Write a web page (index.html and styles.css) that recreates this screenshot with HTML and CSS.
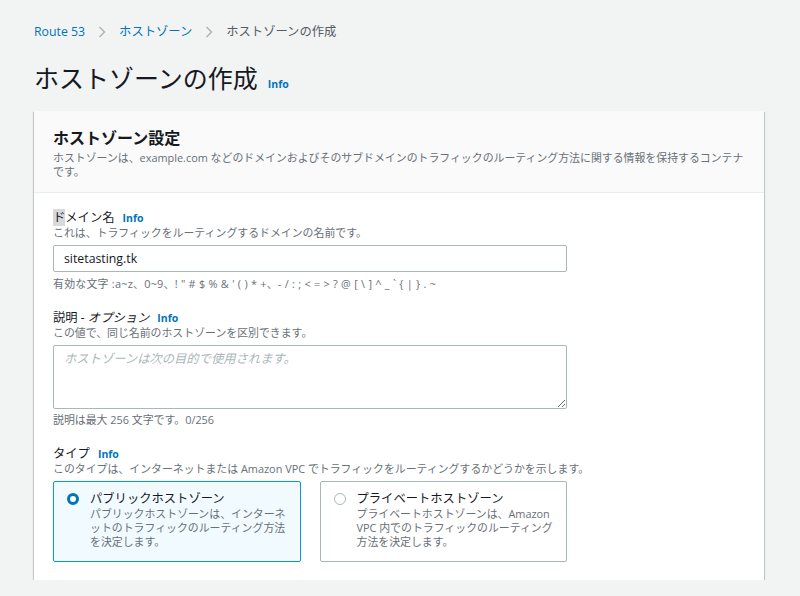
FILE: index.html
```html
<!DOCTYPE html>
<html lang="ja">
<head>
<meta charset="utf-8">
<title>ホストゾーンの作成</title>
<link rel="stylesheet" href="styles.css">
</head>
<body>
<div class="page">
  <nav class="crumbs">
    <a class="crumb-link">Route 53</a>
    <svg class="chev" width="8" height="12" viewBox="0 0 8 12"><path d="M1.5 1 L6.5 6 L1.5 11" fill="none" stroke="#aab7b8" stroke-width="1.5"/></svg>
    <a class="crumb-link">ホストゾーン</a>
    <svg class="chev" width="8" height="12" viewBox="0 0 8 12"><path d="M1.5 1 L6.5 6 L1.5 11" fill="none" stroke="#aab7b8" stroke-width="1.5"/></svg>
    <span class="crumb-current">ホストゾーンの作成</span>
  </nav>

  <h1 class="page-title">ホストゾーンの作成<span class="info">Info</span></h1>

  <section class="card">
    <header class="card-head">
      <h2 class="card-title">ホストゾーン設定</h2>
      <p class="card-desc">ホストゾーンは、example.com などのドメインおよびそのサブドメインのトラフィックのルーティング方法に関する情報を保持するコンテナ<br>です。</p>
    </header>
    <div class="card-body">
      <div class="field">
        <div class="label"><span class="sel">ド</span>メイン名<span class="info">Info</span></div>
        <div class="desc">これは、トラフィックをルーティングするドメインの名前です。</div>
        <input class="text-input" type="text" value="sitetasting.tk">
        <div class="hint hint-chars">有効な文字 :a~z、0~9、! " # $ % &amp; ' ( ) * +、- / : ; &lt; = &gt; ? @ [ \ ] ^ _ ` { | } . ~</div>
      </div>

      <div class="field field-desc">
        <div class="label">説明 <i class="opt">- オプション</i><span class="info">Info</span></div>
        <div class="desc">この値で、同じ名前のホストゾーンを区別できます。</div>
        <textarea class="text-area" placeholder="ホストゾーンは次の目的で使用されます。"></textarea>
        <div class="hint hint-tight">説明は最大 256 文字です。0/256</div>
      </div>

      <div class="field last">
        <div class="label">タイプ<span class="info">Info</span></div>
        <div class="desc">このタイプは、インターネットまたは Amazon VPC でトラフィックをルーティングするかどうかを示します。</div>
        <div class="tiles">
          <div class="tile selected">
            <span class="radio on"></span>
            <div class="tile-text">
              <div class="tile-title">パブリックホストゾーン</div>
              <div class="tile-desc">パブリックホストゾーンは、インターネ<br>ットのトラフィックのルーティング方法<br>を決定します。</div>
            </div>
          </div>
          <div class="tile">
            <span class="radio"></span>
            <div class="tile-text">
              <div class="tile-title">プライベートホストゾーン</div>
              <div class="tile-desc">プライベートホストゾーンは、Amazon<br>VPC 内でのトラフィックのルーティング<br>方法を決定します。</div>
            </div>
          </div>
        </div>
      </div>
    </div>
  </section>
</div>
</body>
</html>
```

FILE: styles.css
```css
* { box-sizing: border-box; }

html, body {
  margin: 0;
  padding: 0;
  background: #f2f3f3;
}

body {
  font-family: "Open Sans", "Noto Sans CJK JP", sans-serif;
  color: #16191f;
  font-size: 12.3px;
}

.page {
  width: 730px;
  margin-left: 34px;
  padding-top: 24px;
}

.crumbs {
  display: flex;
  align-items: center;
  height: 16px;
  line-height: 16px;
  font-size: 12.3px;
}

.crumb-link {
  color: #0073bb;
}

.crumb-current {
  color: #545b64;
}

.chev {
  margin: 0 13px 0 13px;
}

.page-title {
  margin: 23px 0 0 0;
  font-size: 25px;
  line-height: 30px;
  height: 30px;
  font-weight: 400;
  color: #16191f;
  display: flex;
  align-items: baseline;
}

.page-title .info {
  margin-left: 10px;
}

.info {
  color: #0073bb;
  font-weight: 700;
  font-size: 10.5px;
  font-style: normal;
}

.card {
  margin-top: 18px;
  background: #ffffff;
  box-shadow: 0 1px 1px 0 rgba(0, 28, 36, 0.3), 1px 1px 1px 0 rgba(0, 28, 36, 0.15), -1px 1px 1px 0 rgba(0, 28, 36, 0.15);
}

.card-head {
  background: #fafafa;
  border-bottom: 1px solid #eaeded;
  padding: 17px 19px 13px 19px;
}

.card-title {
  margin: 0;
  font-size: 16px;
  line-height: 20px;
  font-weight: 700;
}

.card-desc {
  margin: 3px 0 0 0;
  font-size: 10.9px;
  line-height: 14px;
  color: #687078;
  white-space: nowrap;
}

.card-body {
  padding: 17px 19px 18px 19px;
}

.field {
  margin-bottom: 19px;
}

.field.last {
  margin-bottom: 0;
}

.field-desc {
  margin-bottom: 19px;
}

.label {
  font-size: 12.3px;
  line-height: 16px;
}

.label .info {
  margin-left: 8px;
}

.sel {
  background: #d9d9d9;
}

.opt {
  font-style: italic;
}

.desc {
  font-size: 10.9px;
  line-height: 14px;
  color: #687078;
}

.text-input {
  display: block;
  margin-top: 5px;
  width: 514px;
  height: 27px;
  border: 1px solid #aab7b8;
  border-radius: 2px;
  background: #fff;
  padding: 0 10px;
  font-family: "Open Sans", "Noto Sans CJK JP", sans-serif;
  font-size: 12.3px;
  color: #16191f;
  outline: none;
}

.text-area {
  display: block;
  margin-top: 5px;
  width: 514px;
  height: 64px;
  border: 1px solid #aab7b8;
  border-radius: 2px;
  background: #fff;
  padding: 5px 10px;
  font-family: "Open Sans", "Noto Sans CJK JP", sans-serif;
  font-size: 12.3px;
  line-height: 16px;
  color: #16191f;
  outline: none;
}

.text-area::placeholder {
  color: #aab7b8;
  font-style: italic;
}

.hint {
  margin-top: 5px;
  font-size: 10.9px;
  line-height: 14px;
  color: #687078;
}

.hint-chars {
  letter-spacing: 0.25px;
}

.hint-tight {
  margin-top: 4px;
}

.tiles {
  margin-top: 5px;
  display: flex;
  gap: 19px;
  width: 514px;
}

.tile {
  flex: 1;
  display: flex;
  align-items: flex-start;
  border: 1px solid #aab7b8;
  border-radius: 2px;
  background: #fff;
  padding: 9px 10px 12px 13px;
}

.tile.selected {
  border-color: #00a1c9;
  background: #f1faff;
}

.radio {
  flex: none;
  width: 12px;
  height: 12px;
  margin-top: 2px;
  border: 1px solid #aab7b8;
  border-radius: 50%;
  background: #fff;
}

.radio.on {
  border: 3.5px solid #0073bb;
}

.tile-text {
  margin-left: 11px;
}

.tile-title {
  font-size: 12.3px;
  line-height: 16px;
}

.tile-desc {
  font-size: 10.9px;
  line-height: 14px;
  color: #687078;
  white-space: nowrap;
}
```
